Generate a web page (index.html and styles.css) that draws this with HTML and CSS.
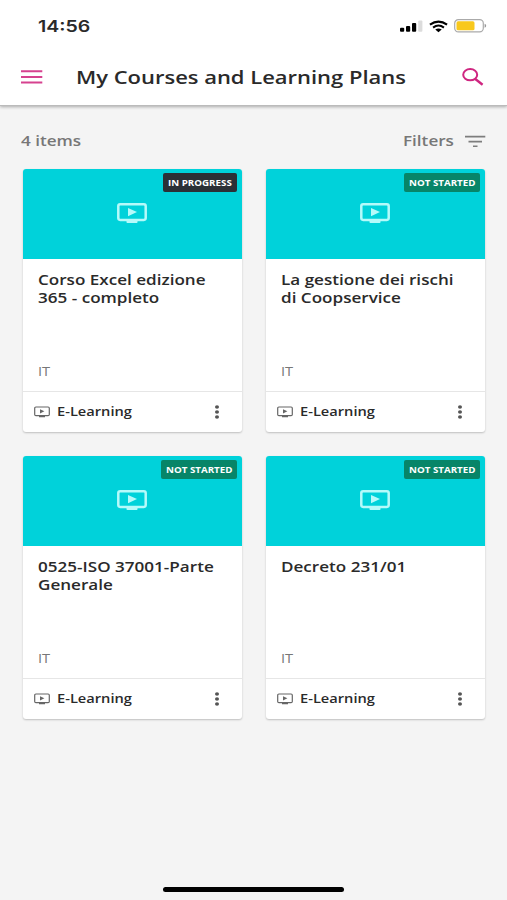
FILE: index.html
```html
<!DOCTYPE html>
<html lang="en">
<head>
  <meta charset="UTF-8">
  <title>My Courses and Learning Plans</title>
  <link rel="stylesheet" href="styles.css">
</head>
<body>

  <svg class="defs">
    <symbol id="tv" viewBox="0 0 30 20">
      <rect x="1.3" y="1.3" width="27.4" height="15.6" rx="1.8" fill="none" stroke="currentColor" stroke-width="2.5"/>
      <path d="M11 5v8.2l9-4.1zM9.5 17h11v2.2a.8.8 0 0 1-.8.8h-9.4a.8.8 0 0 1-.8-.8z" fill="currentColor"/>
    </symbol>
    <symbol id="tv-small" viewBox="0 0 16 12">
      <rect x=".7" y="1" width="14.6" height="8.6" rx="1.2" fill="none" stroke="currentColor" stroke-width="1.2"/>
      <path d="M6 3.2v4.2l4.4-2.1zM5 10h6v1.3H5z" fill="currentColor"/>
    </symbol>
    <symbol id="dots" viewBox="0 0 6 14">
      <ellipse cx="3" cy="2" rx="2" ry="1.7"/>
      <ellipse cx="3" cy="7" rx="2" ry="1.7"/>
      <ellipse cx="3" cy="12" rx="2" ry="1.7"/>
    </symbol>
  </svg>

  <header class="header">
    <div class="status">
      <span class="time"><span class="wide">14:56</span></span>
      <svg class="signal" width="23" height="12" viewBox="0 0 23 12">
        <rect x="0" y="7.8" width="4.2" height="4" rx="1"/>
        <rect x="6" y="6" width="4.2" height="5.8" rx="1"/>
        <rect x="12" y="3" width="4.2" height="8.8" rx="1"/>
        <rect x="18.2" y=".4" width="4.2" height="11.4" rx="1" fill="#dcdcdc"/>
      </svg>
      <svg class="wifi" width="19" height="13" viewBox="0 0 20 13">
        <g fill="none" stroke="#000" stroke-width="2.2">
          <path d="M1 4.6Q10-1.9 19 4.6"/>
          <path d="M4.3 7.6Q10 3.4 15.7 7.6"/>
        </g>
        <path d="M6.6 9.7Q10 7.5 13.4 9.7L10 12.6z"/>
      </svg>
      <svg class="battery" width="33" height="14" viewBox="0 0 33 14">
        <rect x=".7" y=".7" width="28.6" height="12.2" rx="3.6" fill="none" stroke="#aaa" stroke-width="1.2"/>
        <rect x="2.5" y="2.3" width="18" height="9" rx="1.6" fill="#f8c81c"/>
        <path d="M30.6 4.8q1.6.6 1.6 2t-1.6 2z" fill="#999"/>
      </svg>
    </div>
    <div class="bar">
      <svg class="menu" width="22" height="14" viewBox="0 0 22 14">
        <path d="M0 1.2h21.3M0 7h21.3M0 12.6h21.3" stroke="#d6428f" stroke-width="2"/>
      </svg>
      <h1><span class="wide">My Courses and Learning Plans</span></h1>
      <svg class="search" width="22" height="18" viewBox="0 0 22 18">
        <ellipse cx="8.2" cy="6.7" rx="7" ry="5.6" fill="none" stroke="#cf2680" stroke-width="2"/>
        <path d="M13 10.8l7.6 6" stroke="#cf2680" stroke-width="2.4"/>
      </svg>
    </div>
  </header>

  <div class="tools">
    <span class="count"><span class="wide">4 items</span></span>
    <span class="filters"><span class="wide">Filters</span></span>
    <svg width="21" height="12" viewBox="0 0 21 12">
      <path d="M0 1.6h20.3M3.5 6.6h13.5M8 11.2h4.5" stroke="#7d7d7d" stroke-width="1.6"/>
    </svg>
  </div>

  <main class="grid">
    <div class="card">
      <div class="cover">
        <span class="badge dark"><span class="wide">IN PROGRESS</span></span>
        <svg><use href="#tv"/></svg>
      </div>
      <div class="info">
        <h2 class="wide">Corso Excel edizione<br>365 - completo</h2>
        <p class="lang"><span class="wide">IT</span></p>
      </div>
      <div class="foot">
        <svg class="type"><use href="#tv-small"/></svg>
        <span class="label"><span class="wide">E-Learning</span></span>
        <svg class="more"><use href="#dots"/></svg>
      </div>
    </div>

    <div class="card">
      <div class="cover">
        <span class="badge green"><span class="wide">NOT STARTED</span></span>
        <svg><use href="#tv"/></svg>
      </div>
      <div class="info">
        <h2 class="wide">La gestione dei rischi<br>di Coopservice</h2>
        <p class="lang"><span class="wide">IT</span></p>
      </div>
      <div class="foot">
        <svg class="type"><use href="#tv-small"/></svg>
        <span class="label"><span class="wide">E-Learning</span></span>
        <svg class="more"><use href="#dots"/></svg>
      </div>
    </div>

    <div class="card">
      <div class="cover">
        <span class="badge green"><span class="wide">NOT STARTED</span></span>
        <svg><use href="#tv"/></svg>
      </div>
      <div class="info">
        <h2 class="wide">0525-ISO 37001-Parte<br>Generale</h2>
        <p class="lang"><span class="wide">IT</span></p>
      </div>
      <div class="foot">
        <svg class="type"><use href="#tv-small"/></svg>
        <span class="label"><span class="wide">E-Learning</span></span>
        <svg class="more"><use href="#dots"/></svg>
      </div>
    </div>

    <div class="card">
      <div class="cover">
        <span class="badge green"><span class="wide">NOT STARTED</span></span>
        <svg><use href="#tv"/></svg>
      </div>
      <div class="info">
        <h2 class="wide">Decreto 231/01</h2>
        <p class="lang"><span class="wide">IT</span></p>
      </div>
      <div class="foot">
        <svg class="type"><use href="#tv-small"/></svg>
        <span class="label"><span class="wide">E-Learning</span></span>
        <svg class="more"><use href="#dots"/></svg>
      </div>
    </div>
  </main>

  <div class="home"></div>

</body>
</html>
```
FILE: styles.css
```css
* {
  box-sizing: border-box;
}
body {
  margin: 0;
  height: 900px;
  display: flex;
  flex-direction: column;
  overflow: hidden;
  background: #f4f4f4;
  font-family: "Open Sans", sans-serif;
  color: #2a2a2a;
}
h1, h2, p {
  margin: 0;
}
svg {
  display: block;
  flex: none;
}
.defs {
  display: none;
}
/* letters are set wider than the font */
.wide {
  display: inline-block;
  white-space: nowrap;
  transform: scaleX(1.22);
  transform-origin: left center;
}
.header {
  height: 106px;
  background: #fff;
  border-bottom: 1px solid #bbb;
  box-shadow: 0 1px 3px rgba(0, 0, 0, 0.3);
}
.status {
  height: 52px;
  padding: 0 20px 0 38px;
  display: flex;
  align-items: center;
}
.time {
  flex: 1;
  font-family: Inter, sans-serif;
  font-size: 16px;
  font-weight: 600;
}
.wifi {
  margin: 0 6px;
}
.bar {
  height: 50px;
  padding: 0 23px 0 21px;
  display: flex;
  align-items: center;
}
h1 {
  flex: 1;
  margin-left: 33px;
  padding-bottom: 1px;
  font-size: 18px;
  font-weight: 600;
  line-height: 26px;
}
.tools {
  height: 63px;
  padding: 6px 21px 0 21px;
  display: flex;
  align-items: center;
  color: #777;
  font-size: 14px;
  font-weight: 600;
}
.count {
  flex: 1;
}
.filters {
  width: 62px;
}
.grid {
  flex: 1;
  padding: 0 22px 0 23px;
  display: grid;
  grid-template-columns: 219px 219px;
  gap: 24px;
  align-content: start;
}
.card {
  height: 263px;
  display: flex;
  flex-direction: column;
  background: #fff;
  border-radius: 3px;
  box-shadow: 0 1px 2px rgba(0, 0, 0, 0.22);
}
.cover {
  position: relative;
  height: 90px;
  padding-top: 34px;
  background: #00d2da;
  border-radius: 3px 3px 0 0;
}
.cover svg {
  width: 30px;
  height: 20px;
  margin-left: 94px;
  color: #b5fafa;
}
.badge {
  position: absolute;
  top: 4px;
  right: 5px;
  height: 19px;
  padding-left: 5px;
  border-radius: 2px;
  color: #fff;
  font-size: 8px;
  font-weight: 700;
  line-height: 19px;
}
.dark {
  width: 74px;
  background: #2b3036;
}
.green {
  width: 76px;
  background: #078568;
}
.info {
  flex: 1;
  padding: 12px 15px 10px;
  display: flex;
  flex-direction: column;
  align-items: flex-start;
  justify-content: space-between;
}
h2 {
  font-size: 14px;
  font-weight: 600;
  line-height: 17.5px;
}
.lang {
  color: #777;
  font-size: 12px;
  font-weight: 500;
  line-height: 18px;
}
.foot {
  height: 41px;
  padding: 0 22px 0 11px;
  display: flex;
  align-items: center;
  border-top: 1px solid #e6e6e6;
}
.type {
  width: 16px;
  height: 12px;
  color: #666;
}
.label {
  flex: 1;
  margin-left: 7px;
  padding-bottom: 1px;
  font-size: 12px;
  font-weight: 600;
}
.more {
  width: 6px;
  height: 14px;
  fill: #555;
}
.home {
  width: 181px;
  height: 5px;
  margin: 0 auto 8px;
  border-radius: 3px;
  background: #000;
}
```
